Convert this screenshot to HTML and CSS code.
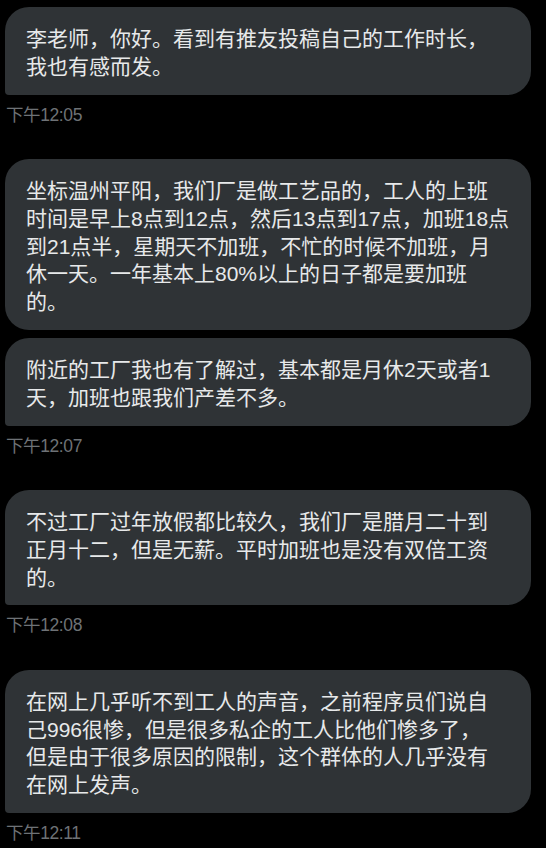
FILE: index.html
```html
<!DOCTYPE html>
<html lang="zh-CN">
<head>
<meta charset="utf-8">
<title>消息</title>
<link rel="stylesheet" href="styles.css">
</head>
<body>
<main class="chat">
  <section class="group">
    <div class="bubble last">李老师，你好。看到有推友投稿自己的工作时长，<br>我也有感而发。</div>
    <div class="time">下午12:05</div>
  </section>
  <section class="group">
    <div class="bubble">坐标温州平阳，我们厂是做工艺品的，工人的上班<br>时间是早上8点到12点，然后13点到17点，加班18点<br>到21点半，星期天不加班，不忙的时候不加班，月<br>休一天。一年基本上80%以上的日子都是要加班<br>的。</div>
    <div class="bubble last">附近的工厂我也有了解过，基本都是月休2天或者1<br>天，加班也跟我们产差不多。</div>
    <div class="time">下午12:07</div>
  </section>
  <section class="group">
    <div class="bubble last">不过工厂过年放假都比较久，我们厂是腊月二十到<br>正月十二，但是无薪。平时加班也是没有双倍工资<br>的。</div>
    <div class="time">下午12:08</div>
  </section>
  <section class="group">
    <div class="bubble last">在网上几乎听不到工人的声音，之前程序员们说自<br>己996很惨，但是很多私企的工人比他们惨多了，<br>但是由于很多原因的限制，这个群体的人几乎没有<br>在网上发声。</div>
    <div class="time">下午12:11</div>
  </section>
</main>
</body>
</html>
```

FILE: styles.css
```css
html, body {
  margin: 0;
  padding: 0;
  background: #000;
}

body {
  font-family: "Liberation Sans", "Noto Sans CJK SC", sans-serif;
  color: #e7e9ea;
}

.chat {
  display: flex;
  flex-direction: column;
  gap: 34.4px;
  padding: 7px 15px 0 5px;
}

.group {
  display: flex;
  flex-direction: column;
  gap: 8px;
}

.bubble {
  width: 526px;
  box-sizing: border-box;
  padding: 18px 20px 14px 21px;
  background: #2f3336;
  border-radius: 24px;
  font-size: 21px;
  line-height: 27.8px;
  white-space: nowrap;
}

.bubble.last {
  border-bottom-left-radius: 4px;
}

.time {
  margin-top: 2px;
  padding-left: 1px;
  height: 20px;
  font-size: 17.5px;
  line-height: 20px;
  color: #6e7276;
  letter-spacing: -0.4px;
}
```
